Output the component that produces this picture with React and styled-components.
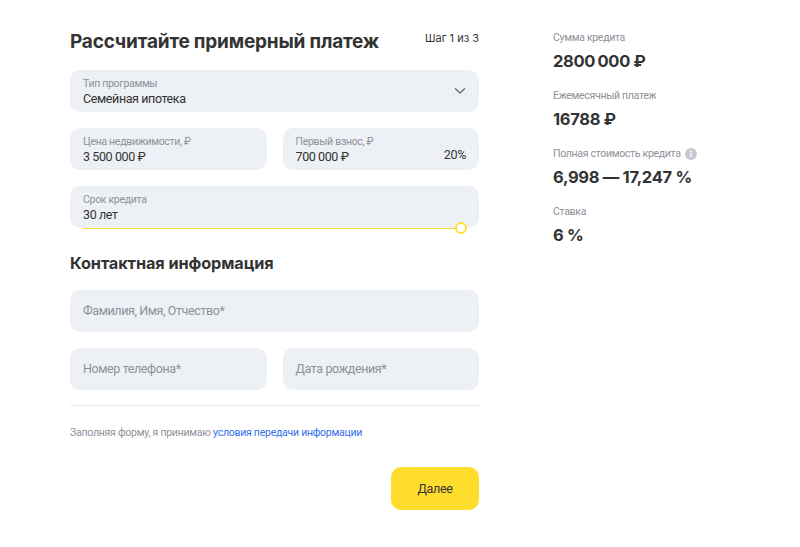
import React from "react";
import styled, { createGlobalStyle } from "styled-components";

const Global = createGlobalStyle`
  html, body { margin: 0; padding: 0; background: #fff; }
  body { font-family: Roboto, "Noto Sans", sans-serif; color: #333333; -webkit-font-smoothing: antialiased; }
  * { box-sizing: border-box; }
`;

const Page = styled.div`
  display: flex;
  align-items: flex-start;
  gap: 74px;
  padding: 30px 0 0 70px;
`;

const FormCol = styled.div`
  width: 409px;
  display: flex;
  flex-direction: column;
`;

const TitleRow = styled.div`
  display: flex;
  justify-content: space-between;
  align-items: flex-start;
  height: 24px;
  margin-bottom: 16px;
`;

const Title = styled.h1`
  margin: 0;
  font-family: Inter, sans-serif;
  font-size: 19px;
  line-height: 24px;
  font-weight: 700;
  letter-spacing: -0.2px;
  color: #333;
`;

const Step = styled.span`
  font-family: Inter, sans-serif;
  font-size: 11px;
  line-height: 16px;
  color: #333;
`;

const Stack = styled.div`
  display: flex;
  flex-direction: column;
  gap: 16px;
`;

const Row = styled.div`
  display: grid;
  grid-template-columns: 1fr 1fr;
  gap: 16px;
`;

const Field = styled.div`
  position: relative;
  height: 42px;
  border-radius: 10px;
  background: #edf0f5;
  padding: 0 13px;
  display: flex;
  align-items: center;
  justify-content: space-between;
`;

const FieldText = styled.div`
  display: flex;
  flex-direction: column;
  gap: 1px;
  padding-top: 1px;
`;

const Label = styled.span`
  font-size: 10.5px;
  line-height: 13px;
  letter-spacing: -0.3px;
  color: #8d9199;
`;

const Value = styled.span`
  font-size: 12.5px;
  line-height: 16px;
  letter-spacing: -0.4px;
  color: #333;
`;

const Placeholder = styled.span`
  font-size: 12.5px;
  line-height: 16px;
  letter-spacing: -0.4px;
  color: #8d9199;
`;

const Suffix = styled.span`
  align-self: flex-end;
  margin-bottom: 7px;
  font-size: 12.5px;
  line-height: 16px;
  letter-spacing: -0.3px;
  color: #333;
`;

const Slider = styled.div`
  position: absolute;
  left: 13px;
  right: 18px;
  bottom: -1px;
  height: 1.5px;
  background: #ffdd2d;
`;

const Thumb = styled.div`
  position: absolute;
  right: -6px;
  top: -5.5px;
  width: 12px;
  height: 12px;
  border-radius: 50%;
  border: 2px solid #ffdd2d;
  background: #fff;
`;

const SubTitle = styled.h2`
  margin: 24px 0 16px;
  font-family: Inter, sans-serif;
  font-size: 16.3px;
  line-height: 22px;
  font-weight: 700;
  letter-spacing: -0.1px;
  color: #333;
`;

const Divider = styled.hr`
  margin: 15px 0 0;
  border: none;
  height: 1px;
  background: #e7e8ea;
`;

const Terms = styled.p`
  margin: 20px 0 0;
  font-size: 10.5px;
  line-height: 14px;
  letter-spacing: -0.25px;
  color: #8d9199;
`;

const Link = styled.a`
  color: #336fee;
  text-decoration: none;
`;

const Actions = styled.div`
  display: flex;
  justify-content: flex-end;
  margin-top: 27px;
`;

const Button = styled.button`
  width: 88px;
  height: 43px;
  border: none;
  border-radius: 10px;
  background: #ffdd2d;
  font-family: inherit;
  font-size: 12.5px;
  letter-spacing: -0.3px;
  color: #333;
  cursor: pointer;
`;

const Summary = styled.div`
  display: flex;
  flex-direction: column;
  gap: 17px;
  padding-top: 1px;
`;

const Item = styled.div`
  display: flex;
  flex-direction: column;
  gap: 5px;
`;

const ItemLabel = styled.span`
  display: flex;
  align-items: center;
  gap: 4px;
  font-size: 10.5px;
  line-height: 14px;
  letter-spacing: -0.3px;
  color: #8d9199;
`;

const ItemValue = styled.span`
  font-family: Inter, sans-serif;
  font-size: 16.5px;
  line-height: 22px;
  font-weight: 700;
  letter-spacing: -0.3px;
  color: #333;
`;

const Chevron = () => (
  <svg width="12" height="8" viewBox="0 0 12 8" fill="none">
    <path d="M1.5 1.8 6 6l4.5-4.2" stroke="#6f737b" strokeWidth="1.5" strokeLinecap="round" strokeLinejoin="round" />
  </svg>
);

const Info = () => (
  <svg width="12" height="12" viewBox="0 0 12 12">
    <circle cx="6" cy="6" r="6" fill="#c7cbd1" />
    <rect x="5.3" y="5" width="1.4" height="4" rx="0.5" fill="#fff" />
    <circle cx="6" cy="3.4" r="0.8" fill="#fff" />
  </svg>
);

export default function App() {
  return (
    <>
      <Global />
      <Page>
        <FormCol>
          <TitleRow>
            <Title>Рассчитайте примерный платеж</Title>
            <Step>Шаг 1 из 3</Step>
          </TitleRow>
          <Stack>
            <Field>
              <FieldText>
                <Label>Тип программы</Label>
                <Value>Семейная ипотека</Value>
              </FieldText>
              <Chevron />
            </Field>
            <Row>
              <Field>
                <FieldText>
                  <Label>Цена недвижимости, ₽</Label>
                  <Value>3 500 000 ₽</Value>
                </FieldText>
              </Field>
              <Field>
                <FieldText>
                  <Label>Первый взнос, ₽</Label>
                  <Value>700 000 ₽</Value>
                </FieldText>
                <Suffix>20%</Suffix>
              </Field>
            </Row>
            <Field>
              <FieldText>
                <Label>Срок кредита</Label>
                <Value>30 лет</Value>
              </FieldText>
              <Slider>
                <Thumb />
              </Slider>
            </Field>
          </Stack>
          <SubTitle>Контактная информация</SubTitle>
          <Stack>
            <Field>
              <Placeholder>Фамилия, Имя, Отчество*</Placeholder>
            </Field>
            <Row>
              <Field>
                <Placeholder>Номер телефона*</Placeholder>
              </Field>
              <Field>
                <Placeholder>Дата рождения*</Placeholder>
              </Field>
            </Row>
          </Stack>
          <Divider />
          <Terms>
            Заполняя форму, я принимаю <Link href="#">условия передачи информации</Link>
          </Terms>
          <Actions>
            <Button>Далее</Button>
          </Actions>
        </FormCol>
        <Summary>
          <Item>
            <ItemLabel>Сумма кредита</ItemLabel>
            <ItemValue>2800{"\u2009"}000 ₽</ItemValue>
          </Item>
          <Item>
            <ItemLabel>Ежемесячный платеж</ItemLabel>
            <ItemValue>16788 ₽</ItemValue>
          </Item>
          <Item>
            <ItemLabel>
              Полная стоимость кредита <Info />
            </ItemLabel>
            <ItemValue>6,998 — 17,247 %</ItemValue>
          </Item>
          <Item>
            <ItemLabel>Ставка</ItemLabel>
            <ItemValue>6 %</ItemValue>
          </Item>
        </Summary>
      </Page>
    </>
  );
}
